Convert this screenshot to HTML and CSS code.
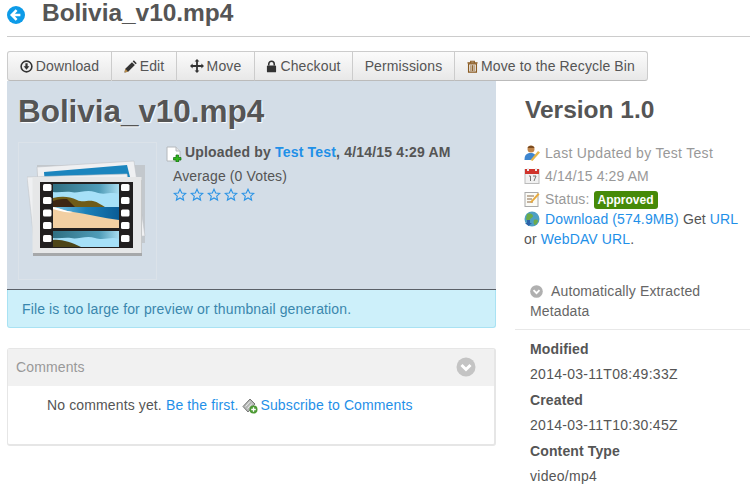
FILE: index.html
```html
<!DOCTYPE html>
<html lang="en">
<head>
<meta charset="utf-8">
<title>Bolivia_v10.mp4</title>
<link rel="stylesheet" href="styles.css">
</head>
<body>
<header class="page-head">
  <svg class="back" viewBox="0 0 18 18" width="18" height="18"><circle cx="9" cy="9" r="9" fill="#0d9be8"/><path d="M9.600 4.200 4.800 9l4.800 4.800M5.200 9h8.200" fill="none" stroke="#fff" stroke-width="2.600"/></svg>
  <h1 class="page-title">Bolivia_v10.mp4</h1>
</header>
<nav class="toolbar">
  <a class="tool tool-download"><svg class="ti" viewBox="0 0 14 14"><circle cx="7" cy="7" r="5.800" fill="none" stroke="#333" stroke-width="1.700"/><path d="M5.800 3.400h2.400v3.400h1.900L7 10.400 3.900 6.800h1.900z" fill="#333"/></svg>Download</a>
  <a class="tool tool-edit"><svg class="ti" viewBox="0 0 14 14"><path d="M.5 13.500l.9-4 7.200-7.200 3.100 3.100-7.200 7.200z" fill="#333"/><path d="M.5 13.500l.9-4 3.100 3.100z" fill="#b58a4a"/><path d="M9.400 1.500l1.200-1.200 3.100 3.100-1.200 1.200z" fill="#333"/></svg>Edit</a>
  <a class="tool tool-move"><svg class="ti ti-wide" viewBox="0 0 14 14"><path d="M7 0l2.400 2.600H7.900v3.500h3.500V4.600L14 7l-2.600 2.400V7.900H7.900v3.500h1.500L7 14l-2.400-2.600h1.500V7.900H2.600v1.500L0 7l2.600-2.400v1.500h3.500V2.600H4.600z" fill="#333"/></svg>Move</a>
  <a class="tool tool-checkout"><svg class="ti ti-narrow" viewBox="0 0 12 14"><path d="M3 6V4.200a3 3 0 0 1 6 0V6" fill="none" stroke="#333" stroke-width="1.700"/><rect x="1" y="6" width="10" height="7.400" rx="1" fill="#333"/></svg>Checkout</a>
  <a class="tool tool-perm">Permissions</a>
  <a class="tool tool-trash"><svg class="ti ti-narrow" viewBox="0 0 12 14"><path d="M.5 3h11M4 3V1.200h4V3" fill="none" stroke="#8a5a20" stroke-width="1.200"/><path d="M1.700 4.200h8.600v9H1.700z" fill="none" stroke="#8a5a20" stroke-width="1.300"/><path d="M4.300 5.500v6.500M6 5.500v6.500M7.700 5.500v6.500" stroke="#8a5a20"/></svg>Move to the Recycle Bin</a>
</nav>
<div class="columns">
  <main class="main">
    <section class="hero">
      <h2 class="hero-title">Bolivia_v10.mp4</h2>
      <div class="hero-body">
        <div class="thumb">
          <svg viewBox="0 0 120 97" width="120" height="97">
            <defs>
              <linearGradient id="sky" x1="0" y1="0" x2="1" y2="0"><stop offset="0" stop-color="#2f6f82"/><stop offset=".7" stop-color="#4f9cb8"/><stop offset="1" stop-color="#a8dcf0"/></linearGradient>
              <linearGradient id="sea" x1="0" y1="0" x2="1" y2="0"><stop offset="0" stop-color="#7cc4e0"/><stop offset=".5" stop-color="#1b80b8"/><stop offset="1" stop-color="#0b5c96"/></linearGradient>
            </defs>
            <rect x="10" y="5" width="108" height="78" fill="#c3c8cd"/>
            <path d="M10 7 107 1l11 75L14 82z" fill="#eff0f2" stroke="#bfc3c7" stroke-width=".6"/>
            <path d="M17 12 100 5l5 20H18z" fill="#1b85be"/>
            <path d="M0 17l100-3 10 76H8z" fill="#eff0f2" stroke="#c3c6c9" stroke-width=".6"/>
            <rect x="6" y="20" width="109" height="76" fill="#a6a8aa"/>
            <rect x="5.500" y="17" width="109" height="76" fill="#e6e7e8"/>
            <rect x="13" y="22" width="93" height="66" fill="#221f1f"/>
            <rect x="26" y="24" width="66" height="44" fill="#a6e0f8"/>
            <path d="M26 24h66v10c-9-3-14 2-24-2-9-3-18 2-24 0-6-1-12 1-18 0z" fill="url(#sky)"/>
            <path d="M26 38c8-2 16-2 24 2 6 3 10 0 16 1 5 1 8 4 12 6H26z" fill="#6f5c18"/>
            <path d="M26 47V41c6-2 10-2 14-2l8 8z" fill="#3d2612"/>
            <rect x="26" y="47" width="66" height="13" fill="url(#sea)"/>
            <path d="M26 47c6 1 12 4 20 5 14 2 30 6 46 8v8H26z" fill="#f2cfa2"/>
            <path d="M26 47c6 1 12 4 20 5l-3 .5C36 52 30 50 26 49z" fill="#fff"/>
            <rect x="26" y="71" width="66" height="16" fill="#a6e0f8"/>
            <path d="M26 71h66v8c-9-3-14 2-24-1-9-3-18 2-24 0-6-1-12 1-18 0z" fill="url(#sky)"/>
            <path d="M26 80c8-1 18 2 28 7H26z" fill="#4d4518"/>
            <g fill="#fff"><rect x="16" y="24" width="8.500" height="7" rx="1.500"/><rect x="16" y="37" width="8.500" height="7" rx="1.500"/><rect x="16" y="49.500" width="8.500" height="7" rx="1.500"/><rect x="16" y="62" width="8.500" height="7" rx="1.500"/><rect x="16" y="75" width="8.500" height="7" rx="1.500"/><rect x="94" y="24" width="8.500" height="7" rx="1.500"/><rect x="94" y="37" width="8.500" height="7" rx="1.500"/><rect x="94" y="49.500" width="8.500" height="7" rx="1.500"/><rect x="94" y="62" width="8.500" height="7" rx="1.500"/><rect x="94" y="75" width="8.500" height="7" rx="1.500"/></g>
          </svg>
        </div>
        <div class="info">
          <p class="uploaded"><svg class="file-ico" viewBox="0 0 16 16" width="16" height="16"><path d="M1 1h9l4 4v10H1z" fill="#fff" stroke="#b4b8bc"/><path d="M10 1v4h4" fill="#e4e6e8" stroke="#b4b8bc"/><path d="M10 9h2.500v2.500H15V14h-2.500v2H10v-2H7.500v-2.500H10z" fill="#32b61c" stroke="#0c6a0c" stroke-width=".7"/></svg><strong>Uploaded by <a class="link">Test Test</a>, 4/14/15 4:29 AM</strong></p>
          <p class="average">Average (0 Votes)</p>
          <div class="stars">
            <svg viewBox="0 0 14 14" width="14" height="14"><path d="M7 1.200 8.700 5l4.100.4-3.100 2.700.9 4L7 10 3.400 12.100l.9-4L1.200 5.400 5.300 5z" fill="none" stroke="#2b94e6" stroke-width="1.100"/></svg>
            <svg viewBox="0 0 14 14" width="14" height="14"><path d="M7 1.200 8.700 5l4.100.4-3.100 2.700.9 4L7 10 3.400 12.100l.9-4L1.200 5.400 5.300 5z" fill="none" stroke="#2b94e6" stroke-width="1.100"/></svg>
            <svg viewBox="0 0 14 14" width="14" height="14"><path d="M7 1.200 8.700 5l4.100.4-3.100 2.700.9 4L7 10 3.400 12.100l.9-4L1.200 5.400 5.300 5z" fill="none" stroke="#2b94e6" stroke-width="1.100"/></svg>
            <svg viewBox="0 0 14 14" width="14" height="14"><path d="M7 1.200 8.700 5l4.100.4-3.100 2.700.9 4L7 10 3.400 12.100l.9-4L1.200 5.400 5.300 5z" fill="none" stroke="#2b94e6" stroke-width="1.100"/></svg>
            <svg viewBox="0 0 14 14" width="14" height="14"><path d="M7 1.200 8.700 5l4.100.4-3.100 2.700.9 4L7 10 3.400 12.100l.9-4L1.200 5.400 5.300 5z" fill="none" stroke="#2b94e6" stroke-width="1.100"/></svg>
          </div>
        </div>
      </div>
    </section>
    <div class="alert">File is too large for preview or thumbnail generation.</div>
    <section class="comments">
      <div class="comments-head">
        <span>Comments</span>
        <svg viewBox="0 0 20 20" width="20" height="20"><circle cx="10" cy="10" r="9.500" fill="#c4c4c4"/><path d="M5.500 8l4.500 4.500L14.500 8" fill="none" stroke="#fff" stroke-width="3"/></svg>
      </div>
      <p class="comments-body">No comments yet. <a class="link">Be the first.</a> <svg class="sub-ico" viewBox="0 0 16 16" width="16" height="16"><path d="M1 8.500 8 1l5 5-7 8z" fill="#b5b8b6" stroke="#777"/><path d="M3.500 8.500l4.500-5M5.500 10.500l4.500-5" stroke="#eee"/><circle cx="11.500" cy="11.500" r="4" fill="#4d9a34"/><path d="M11.500 9.200v4.600M9.200 11.500h4.600" stroke="#fff" stroke-width="1.300"/></svg> <a class="link">Subscribe to Comments</a></p>
    </section>
  </main>
  <aside class="side">
    <h3 class="version">Version 1.0</h3>
    <ul class="meta">
      <li class="muted updated"><svg class="mi" viewBox="0 0 16 16" width="16" height="16"><circle cx="7" cy="4" r="3.500" fill="#c0854a"/><path d="M3.500 3c1-3 6-3 7 0z" fill="#7a4a20"/><path d="M.5 15c0-5 2-7 6-7s5 2 5 3l-3 4z" fill="#3f86cf"/><path d="M6.500 15l7.500-9 2 1.600-7.500 8.400z" fill="#e6b64a"/></svg>Last Updated by Test Test</li>
      <li class="muted"><svg class="mi" viewBox="0 0 16 16" width="16" height="16"><rect x="1" y="1.500" width="14" height="14" fill="#f1f1f1" stroke="#bbb"/><rect x="1" y="1" width="14" height="5" fill="#d0342c"/><rect x="3" y="0" width="2" height="3" fill="#eee"/><rect x="11" y="0" width="2" height="3" fill="#eee"/><path d="M5 8h1.500v5M9 8h3l-2 5" fill="none" stroke="#777"/></svg>4/14/15 4:29 AM</li>
      <li class="muted"><svg class="mi" viewBox="0 0 16 16" width="16" height="16"><rect x="1" y="1.500" width="13" height="14" fill="#fbfbf6" stroke="#aaa"/><path d="M3 5h7M3 8h5M3 11h6" stroke="#8a6a4a"/><path d="M6 11l8-9 1.500 1.500-8 8.500z" fill="#e8a93c"/></svg>Status: <span class="badge">Approved</span></li>
      <li class="dl"><svg class="mi" viewBox="0 0 16 16" width="16" height="16"><circle cx="8" cy="8" r="7.500" fill="#4d9fc4"/><path d="M3 3c3-1 6 0 6 2s-3 2-3 4-3 1-4-1zM10 9c2-1 4 0 4 1s-2 4-3 4-2-3-1-5z" fill="#6cab4a"/><path d="M3 9h3v3h2l-3.500 3L1 12h2z" fill="#2c62a8"/></svg><a class="link">Download (574.9MB)</a> Get <a class="link">URL</a> or <a class="link">WebDAV URL</a>.</li>
    </ul>
    <div class="meta-toggle">
      <svg class="tog" viewBox="0 0 14 14" width="13" height="13"><circle cx="7" cy="7" r="6.800" fill="#b0b0b0"/><path d="M3.800 5.500 7 8.700l3.200-3.200" fill="none" stroke="#fff" stroke-width="2"/></svg><span>Automatically Extracted</span> <span>Metadata</span>
    </div>
    <dl class="facts">
      <dt>Modified</dt><dd>2014-03-11T08:49:33Z</dd>
      <dt>Created</dt><dd>2014-03-11T10:30:45Z</dd>
      <dt>Content Type</dt><dd>video/mp4</dd>
    </dl>
  </aside>
</div>
</body>
</html>
```

FILE: styles.css
```css
* { box-sizing: border-box; }
html, body { margin: 0; padding: 0; }
body {
  width: 754px;
  height: 490px;
  overflow: hidden;
  padding-left: 7px;
  font: 14px/20px "Liberation Sans", Arial, sans-serif;
  letter-spacing: .13px;
  color: #555;
  background: #fff;
}
p, h1, h2, h3, ul, dl, dd { margin: 0; padding: 0; }
.link { color: #1f90e8; }

.page-head {
  width: 743px;
  height: 37px;
  display: flex;
  align-items: flex-start;
  border-bottom: 1px solid #ccc;
}
.back { margin-top: 6px; flex: none; }
.page-title {
  margin-left: 17px;
  font-size: 24.5px;
  line-height: 26px;
  font-weight: 700;
  letter-spacing: -.05px;
  color: #555;
}

.toolbar { display: flex; margin-top: 14px; height: 30px; }
.tool {
  display: flex;
  align-items: center;
  justify-content: center;
  height: 30px;
  color: #555;
  background: linear-gradient(#fbfbfb, #e8e8e8);
  border: 1px solid #ccc;
  border-left-width: 0;
  border-bottom-color: #bbb;
}
.tool:first-child { border-left-width: 1px; border-radius: 3px 0 0 3px; }
.tool:last-child { border-radius: 0 3px 3px 0; }
.tool-download { width: 105px; }
.tool-edit { width: 65px; }
.tool-move { width: 78px; }
.tool-checkout { width: 98px; }
.tool-perm { width: 102px; }
.tool-trash { width: 193px; }
.ti { width: 13px; height: 13px; margin-right: 3px; flex: none; }
.ti-wide { width: 14px; height: 14px; }
.ti-narrow { width: 11px; }

.columns { display: flex; }
.main { width: 489px; flex: none; }
.hero {
  height: 209px;
  padding: 11px 11px 0;
  background: #d3dde7;
  border-bottom: 1px solid #5a6068;
}
.hero-title {
  font-size: 31.5px;
  line-height: 38px;
  font-weight: 700;
  letter-spacing: -.05px;
  color: #555;
  text-shadow: 1px 1px 1px #fff;
}
.hero-body { display: flex; margin-top: 12px; }
.thumb {
  width: 139px;
  height: 138px;
  flex: none;
  border: 1px solid #dbe2e9;
  padding: 17px 0 0 8px;
}
.thumb svg { display: block; }
.info { margin-left: 9px; }
.uploaded { display: flex; align-items: center; height: 20px; letter-spacing: .18px; }
.file-ico { margin-right: 3px; flex: none; margin-top: 3px; }
.average { margin: 4px 0 0 7px; }
.stars { display: flex; gap: 3px; margin: 2px 0 0 7px; }

.alert {
  height: 38px;
  padding: 9px 14px;
  color: #3a87ad;
  background: #cdf0fa;
  border: 1px solid #a9e2f3;
  border-top: 0;
  border-radius: 0 0 3px 3px;
}

.comments {
  height: 98px;
  margin-top: 20px;
  border: 1px solid #e6e6e6;
  border-width: 1px 2px 2px 1px;
  border-radius: 3px;
}
.comments-head {
  height: 37px;
  padding: 0 18px 1px 8px;
  display: flex;
  align-items: center;
  justify-content: space-between;
  color: #999;
  background: #f1f1f1;
}
.comments-body { padding: 9px 0 0 39px; }
.sub-ico { vertical-align: -4px; margin: 0 -2px 0 0; }

.side { width: 235px; margin-left: 19px; padding-top: 14px; }
.version {
  padding-left: 10px;
  font-size: 24.5px;
  line-height: 30px;
  font-weight: 700;
  letter-spacing: 0;
  color: #555;
}
.meta { list-style: none; margin-top: 18px; padding-left: 9px; }
.meta li { line-height: 20px; margin-bottom: 3px; }
.meta .dl { margin-bottom: 0; margin-top: -3px; }
.meta .updated { letter-spacing: .3px; }
.muted { color: #999; }
.mi { vertical-align: -3px; margin-right: 5px; }
.badge {
  display: inline-block;
  height: 18px;
  padding: 0 4px;
  line-height: 18px;
  font-size: 12px;
  font-weight: 700;
  letter-spacing: 0;
  color: #fff;
  background: #468a08;
  border-radius: 3px;
}
.meta-toggle {
  margin-top: 32px;
  padding: 0 0 8px 15px;
  border-bottom: 1px solid #e8e8e8;
  color: #666;
}
.tog { vertical-align: -2px; margin-right: 8px; }
.facts { padding: 9px 0 0 15px; }
.facts dt { font-weight: 700; line-height: 20px; }
.facts dd { line-height: 20px; margin-top: 5px; letter-spacing: .28px; }
.facts dd + dt { margin-top: 6px; }
```
